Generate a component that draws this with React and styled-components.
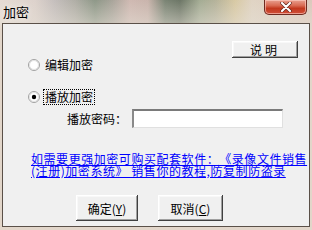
import React from "react";
import styled, { createGlobalStyle } from "styled-components";

const Global = createGlobalStyle`
  html, body { margin: 0; padding: 0; }
  body {
    width: 312px; height: 230px; overflow: hidden;
    font-family: "Noto Sans CJK SC", "Liberation Sans", sans-serif;
    font-size: 12px; color: #000;
  }
`;

const Frame = styled.div`
  width: 312px;
  height: 230px;
  display: flex;
  flex-direction: column;
  box-sizing: border-box;
  padding: 0 2px 3px 2px;
  background:
    linear-gradient(180deg, rgba(255,255,255,0) 0px, rgba(230,224,214,0.5) 23px, #e2d6ca 30px),
    linear-gradient(90deg, #e6dcd4 0px, #ddd2cc 35px, #c4bebc 55px, #b0aea6 75px, #8e9888 95px,
      #a8a49a 112px, #cfb9b2 130px, #c9b4ac 148px, #7a8474 165px, #6c7666 180px, #a4ac94 200px,
      #b4b29a 215px, #d8c9a4 235px, #e0d4c4 252px, #dcc8bc 312px);
`;

const TitleBar = styled.div`
  height: 23px;
  display: flex;
  align-items: flex-start;
  justify-content: space-between;
  flex-shrink: 0;
`;

const Title = styled.span`
  font-size: 13px;
  line-height: 13px;
  margin: 5px 0 0 1px;
  color: #000;
  text-shadow: 0 0 6px rgba(255,255,255,0.9);
`;

const Close = styled.div`
  width: 43px;
  height: 15px;
  margin-right: 3px;
  box-sizing: border-box;
  border: 1px solid #6e2a20;
  border-top: none;
  border-radius: 0 0 5px 5px;
  background: linear-gradient(180deg, #e8a090 0%, #d96a52 40%, #c2381e 60%, #d0503a 100%);
  box-shadow: inset 0 0 0 1px rgba(255,210,200,0.6);
  display: flex;
  align-items: center;
  justify-content: center;
`;

const Client = styled.div`
  flex: 1;
  background: #f0f0f0;
  border: 1px solid #5a5048;
  box-sizing: border-box;
  display: flex;
  flex-direction: column;
`;

const Row = styled.div`
  display: flex;
  align-items: center;
  margin-top: ${p => p.$mt || 0}px;
  padding-left: ${p => p.$pl || 0}px;
  justify-content: ${p => p.$justify || "flex-start"};
  padding-right: ${p => p.$pr || 0}px;
`;

const ClassicButton = styled.button`
  width: ${p => p.$w}px;
  height: ${p => p.$h}px;
  margin-right: ${p => p.$mr || 0}px;
  background: #f0f0f0;
  border: none;
  padding: 0;
  box-shadow: inset -1px -1px #404040, inset 1px 1px #ffffff, inset -2px -2px #a0a0a0, inset 2px 2px #f8f8f8;
  font-family: "Noto Sans CJK SC", sans-serif;
  font-size: 12px;
  color: #000;
  display: flex;
  align-items: center;
  justify-content: center;
  letter-spacing: ${p => p.$ls || 0}px;
`;

const RadioLabel = styled.label`
  display: flex;
  align-items: center;
  gap: 3px;
  line-height: 12px;
`;

const RadioText = styled.span`
  padding: 1px;
  border: 1px dotted ${p => (p.$focus ? "#000" : "transparent")};
`;

const Label = styled.span`
  width: 65px;
  line-height: 12px;
`;

const Input = styled.div`
  width: 151px;
  height: 19px;
  box-sizing: border-box;
  background: #fff;
  border-top: 2px solid #7a7a7a;
  border-left: 2px solid #8a8a8a;
  border-right: 1px solid #e0e0e0;
  border-bottom: 1px solid #e0e0e0;
`;

const LinkBlock = styled.div`
  display: flex;
  flex-direction: column;
`;

const Link = styled.a`
  color: #0000ff;
  text-decoration: underline;
  line-height: 12px;
  height: 12px;
  font-size: 12px;
  letter-spacing: 0.55px;
  text-spacing-trim: space-all;
  display: block;
  white-space: nowrap;
`;

const Radio = ({ checked }) => (
  <svg width="12" height="12" viewBox="0 0 12 12">
    <circle cx="6" cy="6" r="5.5" fill="#fff" stroke="#a0a0a0" />
    <circle cx="6" cy="6" r="4.5" fill="none" stroke="#e0e0e0" />
    {checked && <circle cx="6" cy="6" r="2.2" fill="#000" />}
  </svg>
);

export default function App() {
  return (
    <>
      <Global />
      <Frame>
        <TitleBar>
          <Title>加密</Title>
          <Close>
            <svg width="14" height="10" viewBox="0 0 14 10">
              <path d="M3 1 L11 9 M11 1 L3 9" stroke="#5a2018" strokeWidth="3.4" strokeLinecap="round" />
              <path d="M3 1 L11 9 M11 1 L3 9" stroke="#fff" strokeWidth="2.2" strokeLinecap="round" />
            </svg>
          </Close>
        </TitleBar>
        <Client>
          <Row $mt={17} $justify="flex-end" $pr={11}>
            <ClassicButton $w={66} $h={17} $ls={3}>说明</ClassicButton>
          </Row>
          <Row $mt={-1} $pl={25}>
            <RadioLabel>
              <Radio />
              <RadioText>编辑加密</RadioText>
            </RadioLabel>
          </Row>
          <Row $mt={16} $pl={25}>
            <RadioLabel>
              <Radio checked />
              <RadioText $focus>播放加密</RadioText>
            </RadioLabel>
          </Row>
          <Row $mt={4} $pl={64}>
            <Label>播放密码：</Label>
            <Input />
          </Row>
          <Row $mt={25} $pl={28}>
            <LinkBlock>
              <Link>如需要更强加密可购买配套软件：《录像文件销售</Link>
              <Link>(注册)加密系统》 销售你的教程,防复制防盗录</Link>
            </LinkBlock>
          </Row>
          <Row $mt={18} $pl={73}>
            <ClassicButton $w={62} $h={26} $mr={20}>确定(<u>Y</u>)</ClassicButton>
            <ClassicButton $w={65} $h={26}>取消(<u>C</u>)</ClassicButton>
          </Row>
        </Client>
      </Frame>
    </>
  );
}
